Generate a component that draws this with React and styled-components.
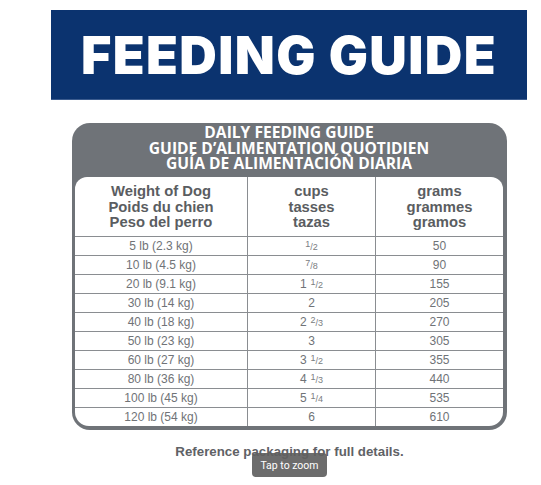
import React from 'react';
import styled, { createGlobalStyle } from 'styled-components';

const GlobalStyle = createGlobalStyle`
  html, body {
    margin: 0;
    padding: 0;
    background: #ffffff;
  }
  body {
    font-family: "Liberation Sans", Arial, sans-serif;
  }
`;

const rows = [
  { weight: '5 lb (2.3 kg)', cups: [null, '1', '2'], grams: '50' },
  { weight: '10 lb (4.5 kg)', cups: [null, '7', '8'], grams: '90' },
  { weight: '20 lb (9.1 kg)', cups: ['1', '1', '2'], grams: '155' },
  { weight: '30 lb (14 kg)', cups: ['2'], grams: '205' },
  { weight: '40 lb (18 kg)', cups: ['2', '2', '3'], grams: '270' },
  { weight: '50 lb (23 kg)', cups: ['3'], grams: '305' },
  { weight: '60 lb (27 kg)', cups: ['3', '1', '2'], grams: '355' },
  { weight: '80 lb (36 kg)', cups: ['4', '1', '3'], grams: '440' },
  { weight: '100 lb (45 kg)', cups: ['5', '1', '4'], grams: '535' },
  { weight: '120 lb (54 kg)', cups: ['6'], grams: '610' },
];

const Page = styled.div`
  position: relative;
  width: 541px;
  height: 485px;
  padding-top: 10px;
  box-sizing: border-box;
  overflow: hidden;
`;

const Banner = styled.div`
  margin-left: 51px;
  width: 476px;
  height: 90px;
  background: #0b336f;
  border-bottom: 1px solid #3b5b8e;
  display: flex;
  align-items: center;
  justify-content: center;
  box-sizing: border-box;
`;

const BannerTitle = styled.h1`
  margin: 0;
  padding-top: 2px;
  font-family: Inter, "Liberation Sans", sans-serif;
  font-weight: 900;
  font-size: 52px;
  letter-spacing: 1.4px;
  color: #ffffff;
  line-height: 1;
`;

const Card = styled.div`
  margin: 23px 0 0 72px;
  width: 435px;
  height: 307px;
  background: #6f7378;
  border-radius: 18px;
  padding: 0 4px 4px 3px;
  box-sizing: border-box;
  display: flex;
  flex-direction: column;
`;

const CardTitle = styled.div`
  height: 54px;
  padding-top: 2px;
  box-sizing: border-box;
  display: flex;
  flex-direction: column;
  align-items: center;
  font-family: "Open Sans", "Liberation Sans", sans-serif;
  font-weight: 700;
  font-size: 15.6px;
  color: #ffffff;
`;

const TitleLine = styled.span`
  display: block;
  height: 15.5px;
  line-height: 15.5px;
  white-space: nowrap;
`;

const Table = styled.div`
  flex: 1;
  background: #ffffff;
  border-radius: 12px 12px 14px 14px;
  display: grid;
  grid-template-columns: 172px 128px 1fr;
  grid-template-rows: 59px repeat(10, 19px);
  overflow: hidden;
`;

const HeadCell = styled.div`
  display: flex;
  flex-direction: column;
  align-items: center;
  justify-content: center;
  padding-top: 2px;
  font-family: "Liberation Sans", Arial, sans-serif;
  font-weight: 700;
  font-size: 14.8px;
  color: #5a5d61;
  border-left: ${({ $first }) => ($first ? 'none' : '1px solid #8a8d91')};
  box-sizing: border-box;
`;

const HeadLine = styled.span`
  display: block;
  height: 15.5px;
  line-height: 15.5px;
  white-space: nowrap;
`;

const Cell = styled.div`
  display: flex;
  align-items: center;
  justify-content: center;
  font-family: "Liberation Sans", Arial, sans-serif;
  font-size: 12px;
  color: #707377;
  border-top: 1px solid #8a8d91;
  border-left: ${({ $first }) => ($first ? 'none' : '1px solid #8a8d91')};
  box-sizing: border-box;
`;

const Frac = styled.span`
  font-size: 9px;
  margin-left: ${({ $whole }) => ($whole ? '4px' : '0')};
  color: #7a7d81;
  sup {
    font-size: 9px;
    vertical-align: 3px;
  }
`;

const Footer = styled.p`
  margin: 14px 0 0;
  text-align: center;
  padding-left: 38px;
  font-family: "Liberation Sans", Arial, sans-serif;
  font-weight: 700;
  font-size: 13.3px;
  line-height: 15px;
  color: #5f6266;
`;

const Tooltip = styled.div`
  position: absolute;
  left: 252px;
  top: 453px;
  width: 75px;
  height: 24px;
  border-radius: 4px;
  background: rgba(96, 96, 96, 0.92);
  color: #ffffff;
  font-family: Roboto, "Liberation Sans", sans-serif;
  font-size: 10.5px;
  display: flex;
  align-items: center;
  justify-content: center;
`;

function Cups({ value }) {
  const [whole, num, den] = value;
  if (!num) return <span>{whole}</span>;
  return (
    <span>
      {whole}
      <Frac $whole={!!whole}>
        <sup>{num}</sup>/{den}
      </Frac>
    </span>
  );
}

export default function App() {
  return (
    <Page>
      <GlobalStyle />
      <Banner>
        <BannerTitle>FEEDING GUIDE</BannerTitle>
      </Banner>

      <Card>
        <CardTitle>
          <TitleLine>DAILY FEEDING GUIDE</TitleLine>
          <TitleLine>GUIDE D’ALIMENTATION QUOTIDIEN</TitleLine>
          <TitleLine>GUÍA DE ALIMENTACIÓN DIARIA</TitleLine>
        </CardTitle>
        <Table>
          <HeadCell $first>
            <HeadLine>Weight of Dog</HeadLine>
            <HeadLine>Poids du chien</HeadLine>
            <HeadLine>Peso del perro</HeadLine>
          </HeadCell>
          <HeadCell>
            <HeadLine>cups</HeadLine>
            <HeadLine>tasses</HeadLine>
            <HeadLine>tazas</HeadLine>
          </HeadCell>
          <HeadCell>
            <HeadLine>grams</HeadLine>
            <HeadLine>grammes</HeadLine>
            <HeadLine>gramos</HeadLine>
          </HeadCell>
          {rows.map((row) => (
            <React.Fragment key={row.weight}>
              <Cell $first>{row.weight}</Cell>
              <Cell><Cups value={row.cups} /></Cell>
              <Cell>{row.grams}</Cell>
            </React.Fragment>
          ))}
        </Table>
      </Card>

      <Footer>Reference packaging for full details.</Footer>
      <Tooltip>Tap to zoom</Tooltip>
    </Page>
  );
}
